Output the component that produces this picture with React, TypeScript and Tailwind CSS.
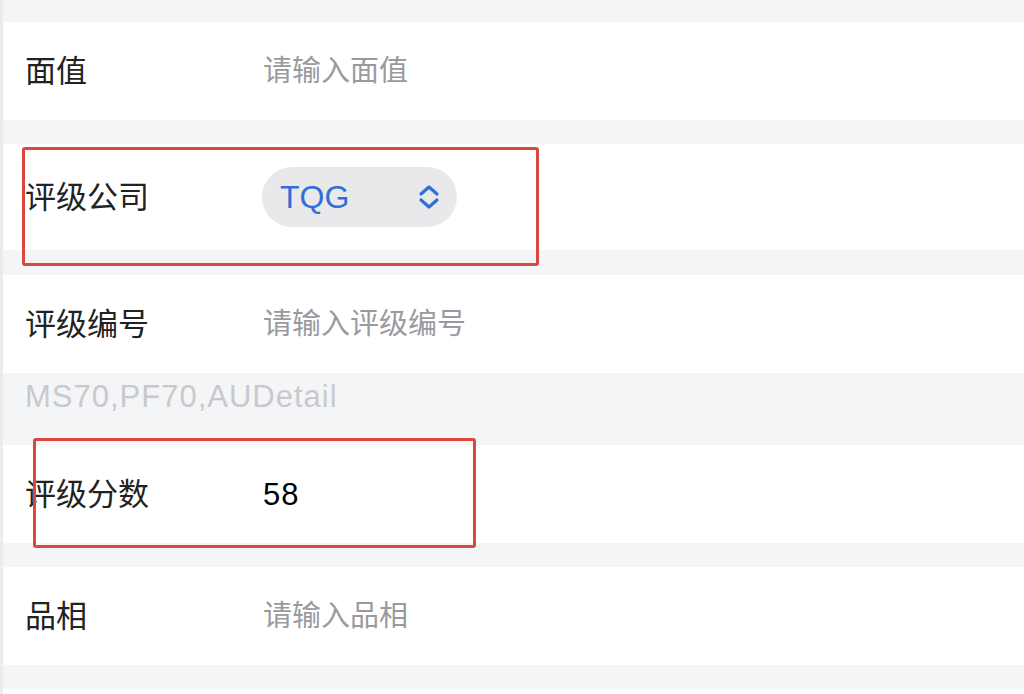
import * as React from 'react';

const font = { fontFamily: '"Liberation Sans", "Noto Sans CJK SC", sans-serif' };

function Row({ label, tall, children }: { label: string; tall?: boolean; children: React.ReactNode }): React.JSX.Element {
  return (
    <div className={tall ? 'flex h-[106px] items-center bg-white' : 'flex h-[98px] items-center bg-white'}>
      <span className="w-[260px] shrink-0 pl-[22px] text-[31px] leading-none text-[#222222]">{label}</span>
      {children}
    </div>
  );
}

function Placeholder({ text }: { text: string }): React.JSX.Element {
  return <span className="text-[29px] leading-none text-[#9a9a9e]">{text}</span>;
}

function Gap(): React.JSX.Element {
  return <div className="h-[24px] bg-[#f4f5f7]" />;
}

export default function App(): React.JSX.Element {
  return (
    <div style={font} className="relative h-[694px] w-[1024px] overflow-hidden border-l-[3px] border-[#ececee] bg-[#f4f5f7]">
      <div className="h-[22px]" />
      <Row label="面值">
        <Placeholder text="请输入面值" />
      </Row>
      <Gap />
      <Row label="评级公司" tall>
        <div className="ml-[-1px] flex h-[60px] w-[195px] items-center justify-between rounded-full bg-[#e9e9eb] pl-[18px] pr-[16px]">
          <span className="text-[32px] leading-none text-[#2f6fd6]">TQG</span>
          <svg width="24" height="26" viewBox="0 0 24 26" fill="none" stroke="#2f6fd6" strokeWidth="3.2" strokeLinecap="round" strokeLinejoin="round">
            <path d="M4 10 L12 3 L20 10" />
            <path d="M4 16 L12 23 L20 16" />
          </svg>
        </div>
      </Row>
      <div className="h-[25px] bg-[#f4f5f7]" />
      <Row label="评级编号">
        <Placeholder text="请输入评级编号" />
      </Row>
      <div className="h-[72px] pl-[22px] pt-[8px]">
        <span className="text-[31px] leading-none tracking-[1px] text-[#c9c9cd]">MS70,PF70,AUDetail</span>
      </div>
      <Row label="评级分数">
        <span className="text-[31px] leading-none tracking-[1px] text-black">58</span>
      </Row>
      <Gap />
      <Row label="品相">
        <Placeholder text="请输入品相" />
      </Row>
      <Gap />
      <div className="h-[98px] bg-white" />

      <div className="absolute left-[19px] top-[147px] h-[119px] w-[517px] rounded-[3px] border-[3px] border-[#d9473f]" />
      <div className="absolute left-[30px] top-[438px] h-[110px] w-[443px] rounded-[3px] border-[3px] border-[#d9473f]" />
    </div>
  );
}
